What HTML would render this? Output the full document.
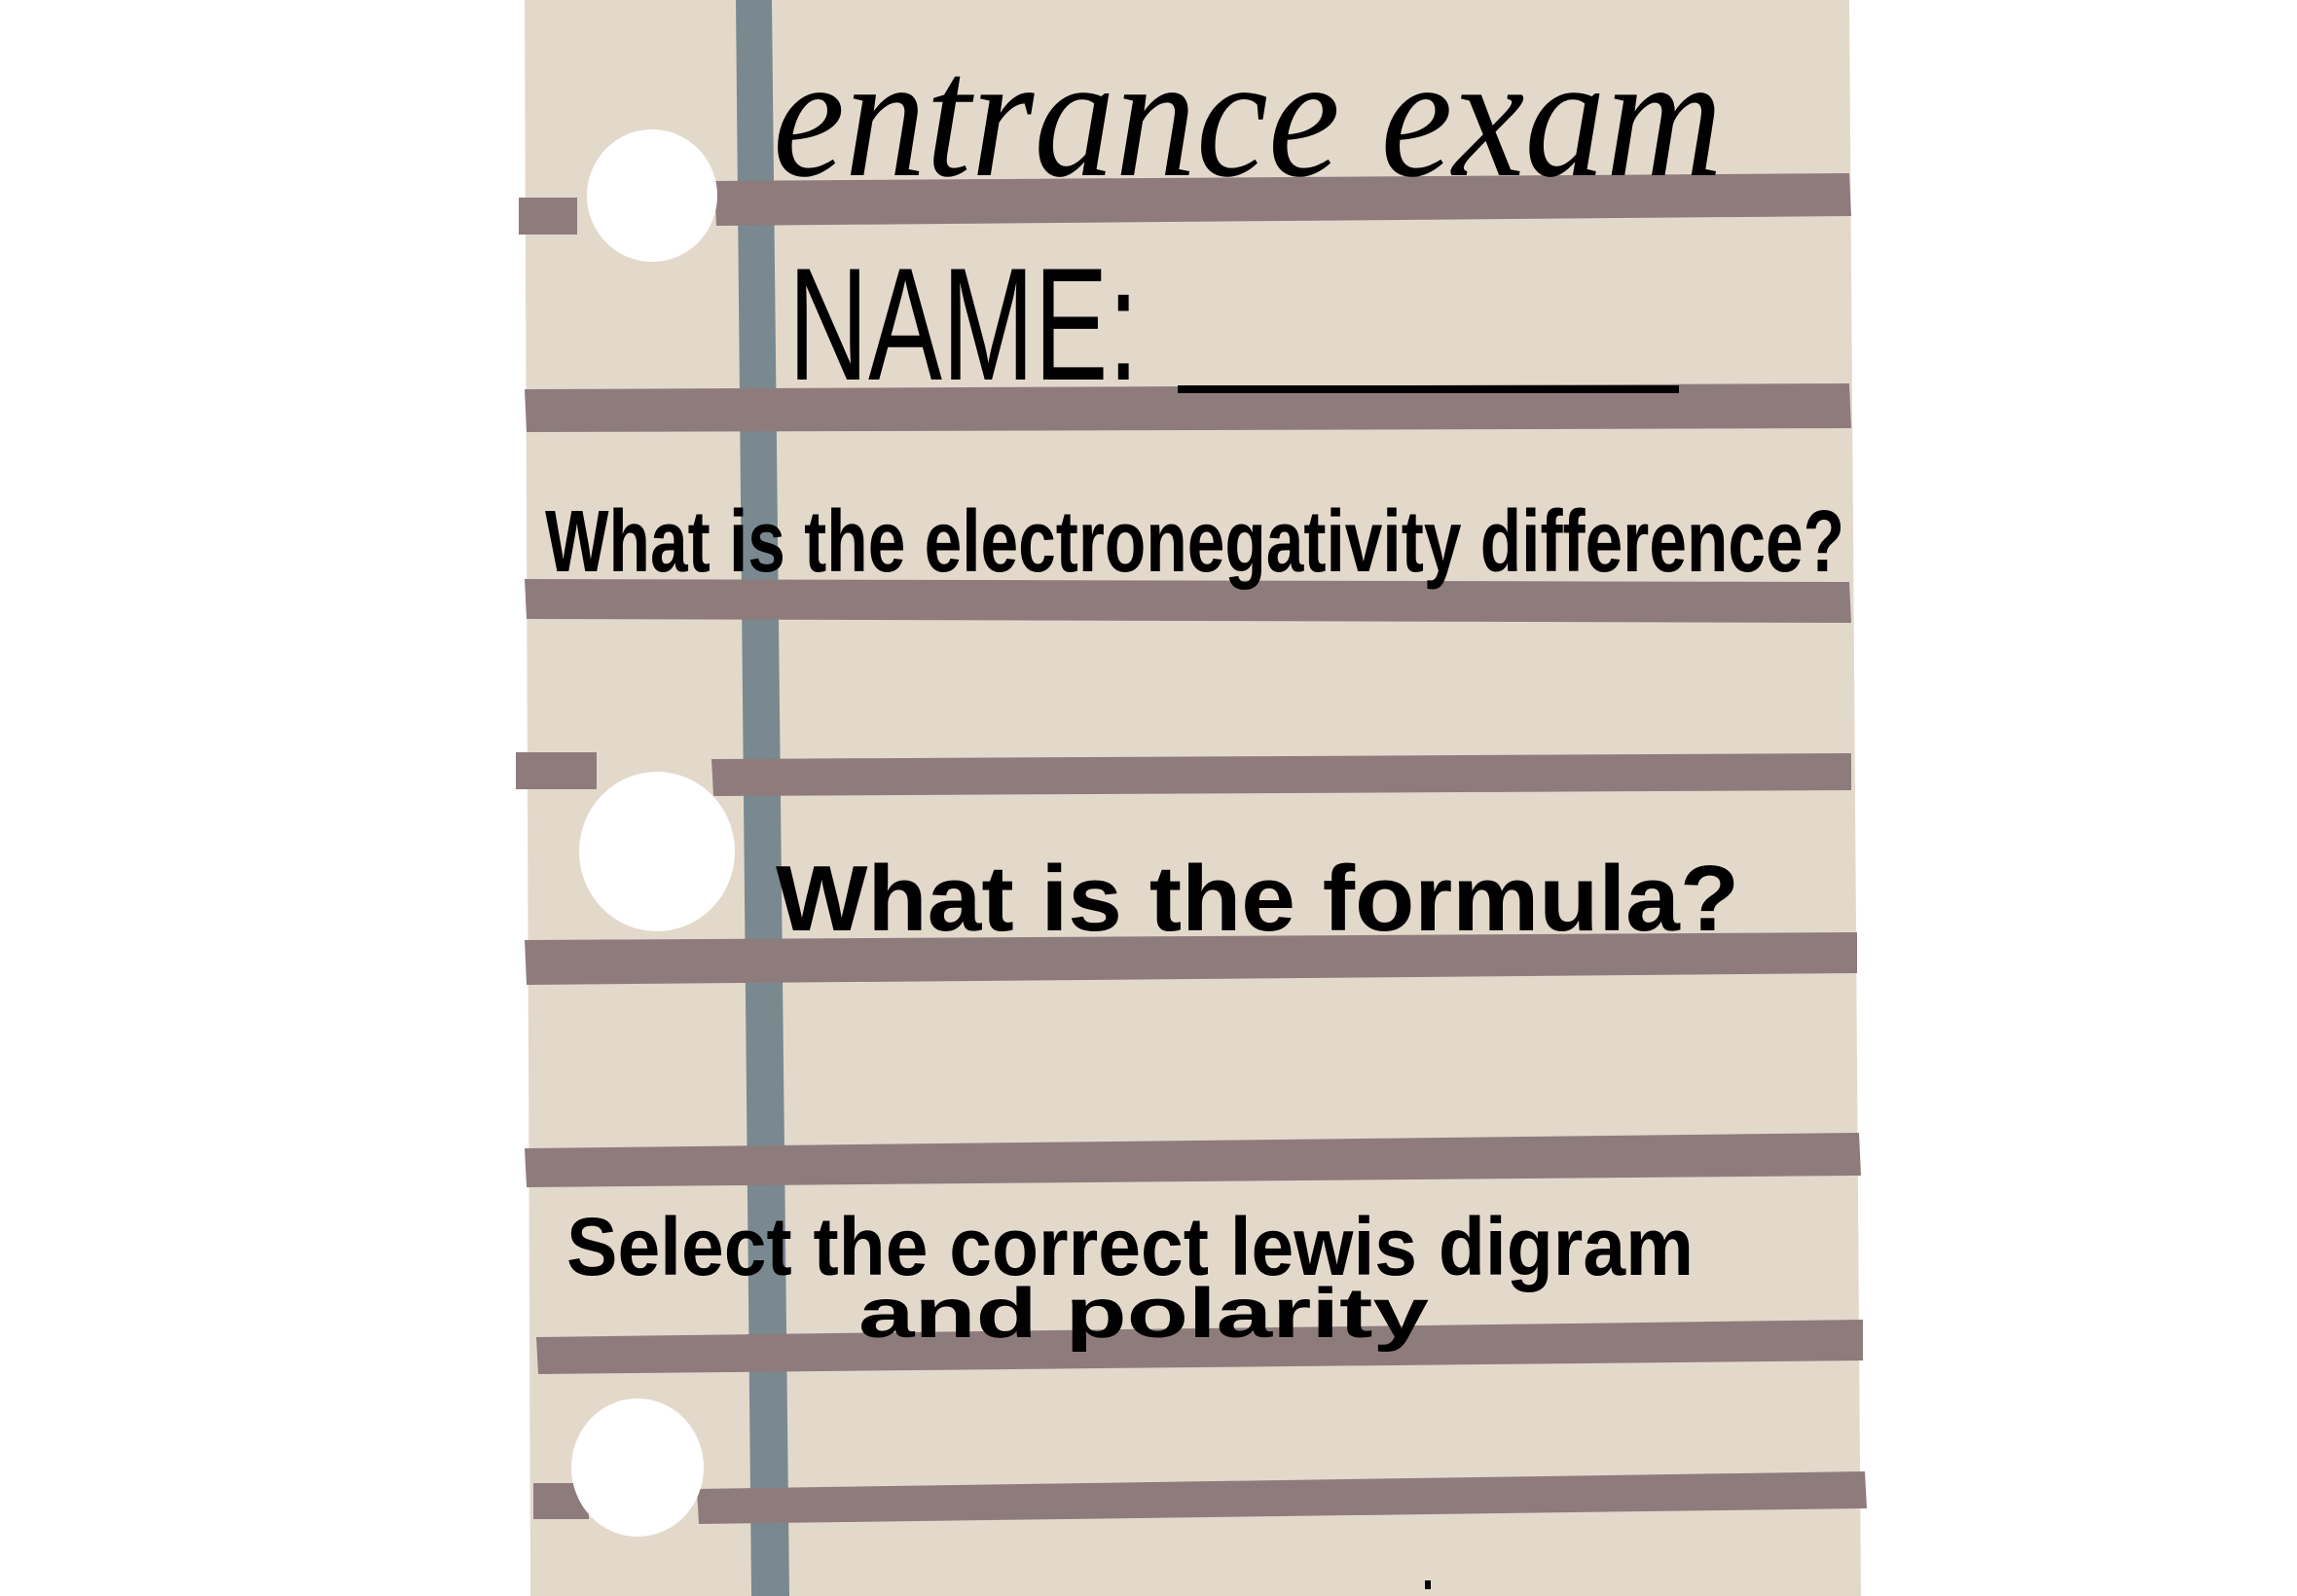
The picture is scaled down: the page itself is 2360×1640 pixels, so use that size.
<!DOCTYPE html>
<html><head><meta charset="utf-8"><style>
html,body{margin:0;padding:0;background:#fff;width:2360px;height:1640px;overflow:hidden}
svg{display:block}
</style></head><body>
<svg width="2360" height="1640" viewBox="0 0 2360 1640" xmlns="http://www.w3.org/2000/svg">
<rect width="2360" height="1640" fill="#ffffff"/>
<polygon points="539,0 1900,0 1912,1640 545,1640" fill="#e3d9cb"/>
<polygon points="756,0 793,0 811,1640 772,1640" fill="#7a8990"/>
<g fill="#8e7c7d">
<polygon points="734,186 1900,178 1902,222 736,232"/>
<rect x="533" y="203" width="60" height="38"/>
<polygon points="539,400 1900,394 1902,440 541,444"/>
<polygon points="539,595 1900,598 1902,640 541,636"/>
<polygon points="731,780 1902,774 1902,812 733,818"/>
<rect x="530" y="773" width="83" height="38"/>
<polygon points="539,966 1908,958 1908,1000 541,1012"/>
<polygon points="539,1180 1910,1164 1912,1208 541,1220"/>
<polygon points="551,1374 1914,1356 1914,1398 553,1412"/>
<polygon points="716,1530 1916,1512 1918,1550 718,1566"/>
<rect x="548" y="1524" width="57" height="37"/>
</g>
<g fill="#ffffff">
<ellipse cx="670" cy="201" rx="67" ry="68"/>
<ellipse cx="675" cy="875" rx="80" ry="82"/>
<ellipse cx="655" cy="1508" rx="68" ry="71"/>
</g>
<g fill="#000" font-family="Liberation Sans, sans-serif">
<text x="794" y="180" font-family="Liberation Serif, serif" font-style="italic" font-size="180" textLength="976" lengthAdjust="spacingAndGlyphs">entrance exam</text>
<text x="810" y="390" font-size="165" textLength="360" lengthAdjust="spacingAndGlyphs">NAME:</text>
<rect x="1210" y="396" width="515" height="8"/>
<text x="560" y="587" font-weight="bold" font-size="90" textLength="1335" lengthAdjust="spacingAndGlyphs">What is the electronegativity difference?</text>
<text x="797" y="956" font-weight="bold" font-size="96" textLength="990" lengthAdjust="spacingAndGlyphs">What is  the formula?</text>
<text x="582" y="1310" font-weight="bold" font-size="84" textLength="1158" lengthAdjust="spacingAndGlyphs">Select the correct lewis digram</text>
<text x="882" y="1374" font-weight="bold" font-size="72" textLength="586" lengthAdjust="spacingAndGlyphs">and   polarity</text>
<rect x="1464" y="1624" width="6" height="9"/>
</g>
</svg>
</body></html>
